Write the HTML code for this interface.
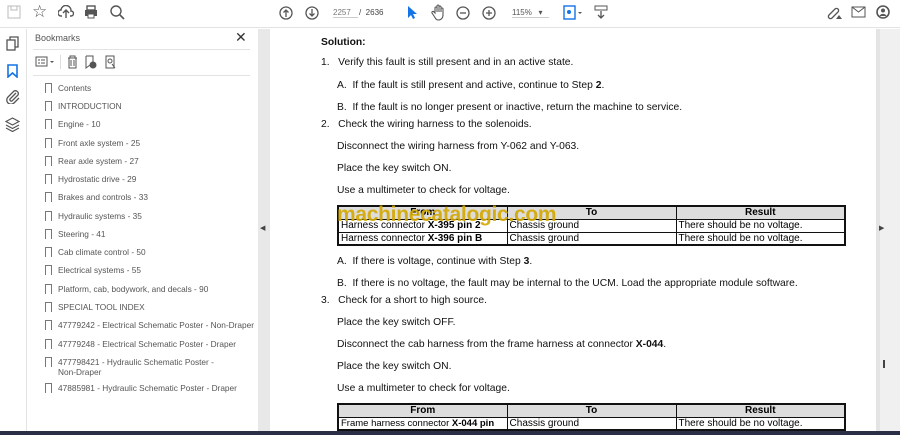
<!DOCTYPE html><html><head><style>
*{margin:0;padding:0;box-sizing:border-box}
body{width:900px;height:435px;overflow:hidden;background:#fff;font-family:"Liberation Sans",Arial,sans-serif;position:relative}
.a{position:absolute;white-space:nowrap}
.tb{position:absolute;left:0;top:0;width:900px;height:28px;background:#fff;border-bottom:1px solid #e3e3e3}
.ic{position:absolute;color:#555;font-size:15px}
.bm{position:absolute;left:58px;font-size:8.3px;color:#555}
.bi{position:absolute;left:45px;width:7px;height:10px;border:1px solid #777;border-bottom:none}
.d{font-size:10.3px;color:#111}
table{position:absolute;border-collapse:collapse;font-size:10px;left:337px;width:509px;border:2px solid #111}
td{border:1px solid #111;height:13px;padding:0 2px;line-height:11px;width:170px}
th{background:#ddd;border:1px solid #111;height:13px;line-height:11px;font-size:10px}
</style></head><body>
<div class="tb">
<svg class="a" style="left:7px;top:5px" width="14" height="14"><rect x="1" y="1" width="12" height="12" fill="none" stroke="#bbb"/><rect x="4" y="1" width="6" height="4" fill="none" stroke="#bbb"/></svg>
<div class="ic" style="left:32px;top:2px;font-size:17px">☆</div>
<svg class="a" style="left:58px;top:5px" width="16" height="14"><path d="M4 11H3a3 3 0 0 1 0-6 5 5 0 0 1 10 1 2.5 2.5 0 0 1 0 5h-1M8 13V6M5 8l3-3 3 3" fill="none" stroke="#555" stroke-width="1.4"/></svg>
<svg class="a" style="left:84px;top:5px" width="14" height="14"><rect x="3" y="1" width="8" height="4" fill="none" stroke="#555" stroke-width="1.4"/><rect x="1" y="5" width="12" height="6" fill="#555"/><rect x="4" y="9" width="6" height="4" fill="#fff" stroke="#555"/></svg>
<svg class="a" style="left:110px;top:5px" width="15" height="15"><circle cx="6" cy="6" r="5" fill="none" stroke="#555" stroke-width="1.4"/><path d="M10 10l4 4" stroke="#555" stroke-width="1.6"/></svg>
<svg class="a" style="left:279px;top:6px" width="14" height="14"><circle cx="7" cy="7" r="6" fill="none" stroke="#555" stroke-width="1.3"/><path d="M7 11V4M4.5 6.5L7 4l2.5 2.5" fill="none" stroke="#555" stroke-width="1.3"/></svg>
<svg class="a" style="left:305px;top:6px" width="14" height="14"><circle cx="7" cy="7" r="6" fill="none" stroke="#555" stroke-width="1.3"/><path d="M7 3v7M4.5 7.5L7 10l2.5-2.5" fill="none" stroke="#555" stroke-width="1.3"/></svg>
<div class="a" style="left:333px;top:8px;font-size:8px;color:#777;border-bottom:1px solid #ccc;width:25px">2257</div>
<div class="a" style="left:359px;top:8px;font-size:8px;color:#444">/ &nbsp;2636</div>
<svg class="a" style="left:406px;top:5px" width="12" height="15"><path d="M2 1v12l3-3 2 4 2-1-2-4h4z" fill="#1473e6"/></svg>
<svg class="a" style="left:431px;top:4px" width="15" height="17"><path d="M4 9V4a1 1 0 0 1 2 0v4V2a1 1 0 0 1 2 0v6V3a1 1 0 0 1 2 0v5V5a1 1 0 0 1 2 0v6c0 3-2 5-4.5 5S5 15 3 12L1 9a1 1 0 0 1 2-1z" fill="none" stroke="#555" stroke-width="1.1"/></svg>
<svg class="a" style="left:456px;top:6px" width="14" height="14"><circle cx="7" cy="7" r="6" fill="none" stroke="#555" stroke-width="1.3"/><path d="M4 7h6" stroke="#555" stroke-width="1.3"/></svg>
<svg class="a" style="left:482px;top:6px" width="14" height="14"><circle cx="7" cy="7" r="6" fill="none" stroke="#555" stroke-width="1.3"/><path d="M4 7h6M7 4v6" stroke="#555" stroke-width="1.3"/></svg>
<div class="a" style="left:512px;top:8px;font-size:8px;color:#555;border-bottom:1px solid #ccc;width:37px">115% &nbsp; ▾</div>
<svg class="a" style="left:563px;top:5px" width="20" height="16"><rect x="1" y="1" width="11" height="13" fill="none" stroke="#1473e6" stroke-width="1.4"/><circle cx="6" cy="7" r="2" fill="#1473e6"/><path d="M15 7l2 2 2-2" fill="#555"/></svg>
<svg class="a" style="left:594px;top:5px" width="14" height="15"><rect x="1" y="1" width="12" height="4" fill="none" stroke="#555"/><path d="M7 6v7M4 10l3 3 3-3" fill="none" stroke="#555" stroke-width="1.3"/></svg>
<svg class="a" style="left:826px;top:5px" width="16" height="15"><path d="M3 10l6-6a2 2 0 0 1 3 3l-6 6a2 2 0 0 1-3-3z" fill="none" stroke="#555" stroke-width="1.3"/><path d="M10 14l3-4 3 4z" fill="#555"/></svg>
<svg class="a" style="left:851px;top:6px" width="15" height="12"><rect x="1" y="1" width="13" height="10" fill="none" stroke="#555"/><path d="M1 1l6.5 5L14 1" fill="none" stroke="#555"/></svg>
<svg class="a" style="left:876px;top:5px" width="15" height="15"><circle cx="7" cy="7" r="6" fill="none" stroke="#555" stroke-width="1.6"/><circle cx="7" cy="5.5" r="2" fill="#555"/><path d="M3.5 11a4 4 0 0 1 7 0" fill="#555"/></svg>
</div>
<div class="a" style="left:0;top:29px;width:27px;height:402px;background:#fff;border-right:1px solid #e3e3e3"></div>
<svg class="a" style="left:6px;top:36px" width="14" height="15"><rect x="1" y="4" width="8" height="10" fill="#fff" stroke="#555" stroke-width="1.3"/><path d="M4 4V1h8v10H9" fill="none" stroke="#555" stroke-width="1.3"/></svg>
<svg class="a" style="left:7px;top:64px" width="12" height="14"><path d="M1 1h9v12L5.5 9 1 13z" fill="none" stroke="#1473e6" stroke-width="1.6"/></svg>
<svg class="a" style="left:6px;top:89px" width="14" height="15"><path d="M10 4l-6 6a1.5 1.5 0 0 0 2 2l6-6a3 3 0 0 0-4-4L2 8a4 4 0 0 0 6 6l5-5" fill="none" stroke="#555" stroke-width="1.3"/></svg>
<svg class="a" style="left:5px;top:117px" width="15" height="15"><path d="M7.5 1L14 4.5 7.5 8 1 4.5zM1 8l6.5 3.5L14 8M1 11l6.5 3.5L14 11" fill="none" stroke="#555" stroke-width="1.2"/></svg>
<div class="a" style="left:28px;top:29px;width:230px;height:402px;background:#fff"></div>
<div class="a" style="left:35px;top:33px;font-size:9px;color:#555">Bookmarks</div>
<div class="a" style="left:235px;top:29px;font-size:14px;color:#333">✕</div>
<div class="a" style="left:33px;top:49px;width:217px;border-top:1px solid #e3e3e3"></div>
<svg class="a" style="left:35px;top:56px" width="20" height="12"><rect x="1" y="1" width="11" height="9" fill="none" stroke="#555"/><path d="M3 4h2M6 4h4M3 7h2M6 7h4" stroke="#555"/><path d="M15 5h4l-2 2z" fill="#555"/></svg>
<div class="a" style="left:60px;top:55px;height:14px;border-left:1px solid #ddd"></div>
<svg class="a" style="left:66px;top:55px" width="58" height="15"><path d="M2 3h9M4 3V1h5v2M3 3v10h7V3M5 5v6M8 5v6" fill="none" stroke="#555"/><path d="M20 1h7v6M20 1v12l4-3" fill="none" stroke="#555"/><circle cx="27" cy="10" r="3.5" fill="#555"/><rect x="40" y="1" width="8" height="12" fill="none" stroke="#555"/><circle cx="44" cy="6" r="2" fill="none" stroke="#555"/><path d="M46 9l3 4" stroke="#555"/></svg>
<div class="a" style="left:33px;top:75px;width:217px;border-top:1px solid #e3e3e3"></div>
<div class="bi" style="top:83px"></div><div class="bm" style="top:83px">Contents</div>
<div class="bi" style="top:101px"></div><div class="bm" style="top:101px">INTRODUCTION</div>
<div class="bi" style="top:119px"></div><div class="bm" style="top:119px">Engine - 10</div>
<div class="bi" style="top:138px"></div><div class="bm" style="top:138px">Front axle system - 25</div>
<div class="bi" style="top:156px"></div><div class="bm" style="top:156px">Rear axle system - 27</div>
<div class="bi" style="top:174px"></div><div class="bm" style="top:174px">Hydrostatic drive - 29</div>
<div class="bi" style="top:192px"></div><div class="bm" style="top:192px">Brakes and controls - 33</div>
<div class="bi" style="top:211px"></div><div class="bm" style="top:211px">Hydraulic systems - 35</div>
<div class="bi" style="top:229px"></div><div class="bm" style="top:229px">Steering - 41</div>
<div class="bi" style="top:247px"></div><div class="bm" style="top:247px">Cab climate control - 50</div>
<div class="bi" style="top:265px"></div><div class="bm" style="top:265px">Electrical systems - 55</div>
<div class="bi" style="top:284px"></div><div class="bm" style="top:284px">Platform, cab, bodywork, and decals - 90</div>
<div class="bi" style="top:302px"></div><div class="bm" style="top:302px">SPECIAL TOOL INDEX</div>
<div class="bi" style="top:320px"></div><div class="bm" style="top:320px">47779242 - Electrical Schematic Poster - Non-Draper</div>
<div class="bi" style="top:339px"></div><div class="bm" style="top:339px">47779248 - Electrical Schematic Poster - Draper</div>
<div class="bi" style="top:357px"></div><div class="bm" style="top:357px">477798421 - Hydraulic Schematic Poster -<br>Non-Draper</div>
<div class="bi" style="top:383px"></div><div class="bm" style="top:383px">47885981 - Hydraulic Schematic Poster - Draper</div>
<div class="a" style="left:258px;top:29px;width:12px;height:402px;background:#e8e8e8"></div>
<div class="a" style="left:260px;top:224px;font-size:7px;color:#444">◀</div>
<div class="a" style="left:880px;top:29px;width:20px;height:402px;background:#f0f0f0"></div>
<div class="a" style="left:876px;top:29px;width:4px;height:402px;background:#e4e4e4"></div>
<div class="a" style="left:883px;top:360px;width:2px;height:8px;background:#444"></div>
<div class="a" style="left:879px;top:224px;font-size:7px;color:#444">▶</div>
<div class="a d" style="left:321px;top:37px;font-weight:bold">Solution:</div>
<div class="a d" style="left:321px;top:57px">1.&nbsp;&nbsp; Verify this fault is still present and in an active state.</div>
<div class="a d" style="left:337px;top:80px">A.&nbsp; If the fault is still present and active, continue to Step <b>2</b>.</div>
<div class="a d" style="left:337px;top:102px">B.&nbsp; If the fault is no longer present or inactive, return the machine to service.</div>
<div class="a d" style="left:321px;top:119px">2.&nbsp;&nbsp; Check the wiring harness to the solenoids.</div>
<div class="a d" style="left:337px;top:141px">Disconnect the wiring harness from Y-062 and Y-063.</div>
<div class="a d" style="left:337px;top:163px">Place the key switch ON.</div>
<div class="a d" style="left:337px;top:185px">Use a multimeter to check for voltage.</div>
<table style="top:205px"><tr><th>From</th><th>To</th><th>Result</th></tr>
<tr><td>Harness connector <b>X-395 pin 2</b></td><td>Chassis ground</td><td>There should be no voltage.</td></tr>
<tr><td>Harness connector <b>X-396 pin B</b></td><td>Chassis ground</td><td>There should be no voltage.</td></tr></table>
<div class="a" style="left:337px;top:203px;font-size:21px;font-weight:bold;color:#d4a800;opacity:.9;letter-spacing:-0.3px">machinecatalogic.com</div>
<div class="a d" style="left:337px;top:256px">A.&nbsp; If there is voltage, continue with Step <b>3</b>.</div>
<div class="a d" style="left:337px;top:278px">B.&nbsp; If there is no voltage, the fault may be internal to the UCM. Load the appropriate module software.</div>
<div class="a d" style="left:321px;top:295px">3.&nbsp;&nbsp; Check for a short to high source.</div>
<div class="a d" style="left:337px;top:317px">Place the key switch OFF.</div>
<div class="a d" style="left:337px;top:339px">Disconnect the cab harness from the frame harness at connector <b>X-044</b>.</div>
<div class="a d" style="left:337px;top:361px">Place the key switch ON.</div>
<div class="a d" style="left:337px;top:383px">Use a multimeter to check for voltage.</div>
<table style="top:403px"><tr><th>From</th><th>To</th><th>Result</th></tr>
<tr><td style="font-size:9.5px">Frame harness connector <b>X-044 pin</b></td><td>Chassis ground</td><td>There should be no voltage.</td></tr></table>
<div class="a" style="left:0;top:431px;width:900px;height:4px;background:#2a2f45"></div>
</body></html>
